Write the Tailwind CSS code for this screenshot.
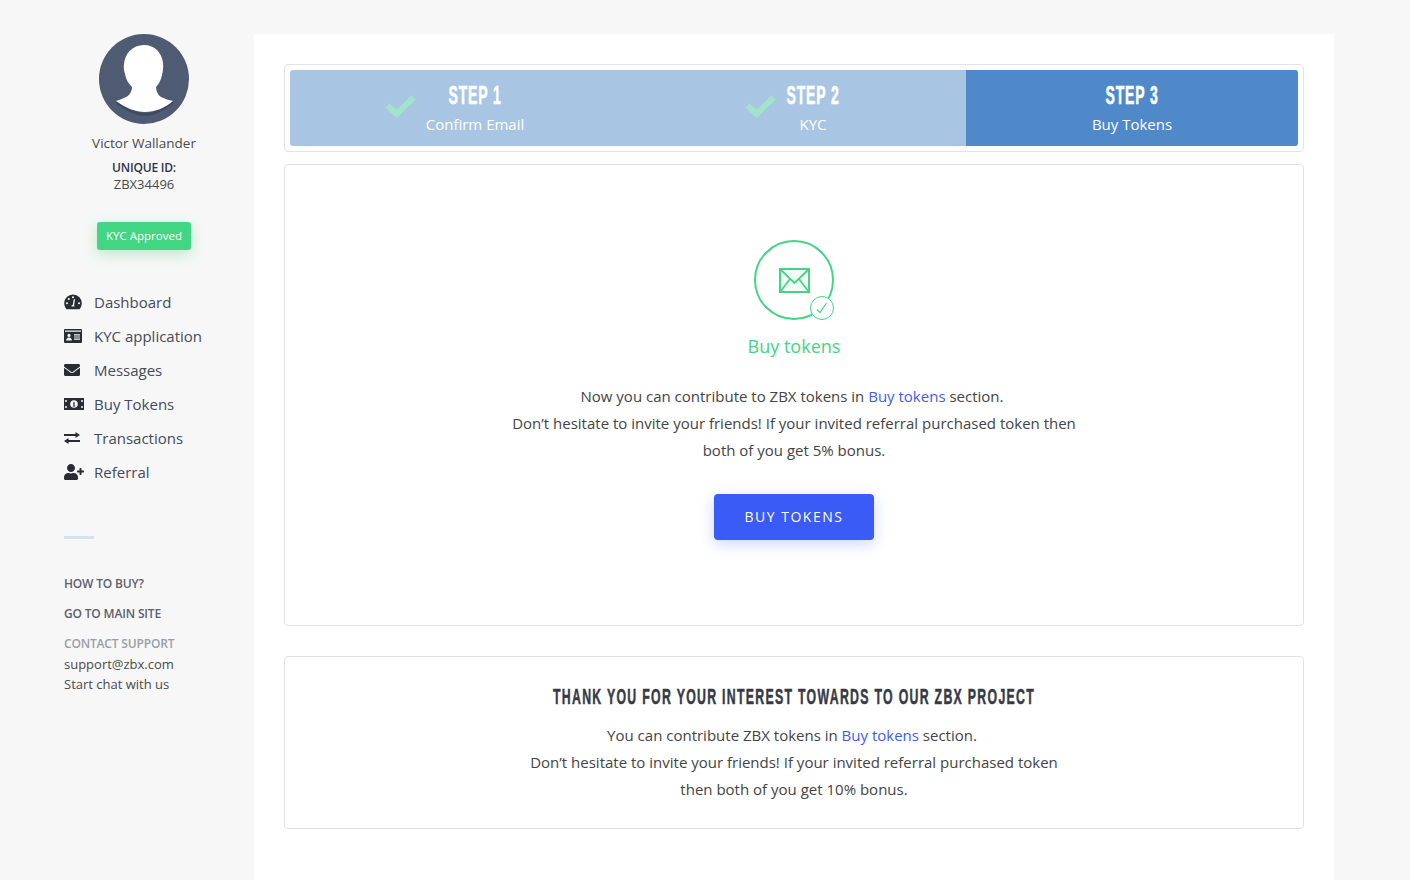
<!DOCTYPE html>
<html lang="en">
<head>
<meta charset="utf-8">
<script src="https://cdn.jsdelivr.net/npm/@tailwindcss/browser@4"></script>
<title>Buy tokens</title>
</head>
<body class="bg-[#f7f7f7] font-['Open_Sans',sans-serif] text-[#3c3c3c] h-[880px] overflow-hidden">
<div class="flex h-[880px] overflow-hidden">
  <!-- Sidebar -->
  <aside class="w-[254px] shrink-0 pt-[34px]">
    <div class="w-[288px]">
      <div class="flex flex-col items-center">
        <svg class="w-[90px] h-[90px]" viewBox="0 0 90 90">
          <circle cx="45" cy="45" r="45" fill="#4f5b72"/>
          <path d="M17 67 C27 72 36 79 46 79 C56 79 66 73 74 67 L74 70 C64 76 56 82 46 82 C36 82 27 76 17 70Z" fill="#3f4a5e"/>
          <path d="M45 11 C33 11 26 20 25 30 C24.500 33 25 37 26 40 C27 46 30 50 33 53 C33 58 30 62 26 63.500 C23 65 20 66 17 67 C27 74 36 78 46 78 C56 78 66 74 74 67 C70 66 66 65 62 63 C59 61 57 57 57 53 C60 50 62 46 63 41 C64 37 64.500 33 64 29 C63 19 56 11 45 11Z" fill="#fff"/>
        </svg>
      </div>
    </div>
    <div class="w-[288px]">
      <p class="text-center text-[13.500px] leading-[19px] mt-[10px] text-[#4a4a4a]">Victor Wallander</p>
      <p class="text-center text-[12px] leading-[16px] mt-[7px] font-semibold tracking-[-0.2px] text-[#2f3542]">UNIQUE ID:</p>
      <p class="text-center text-[13px] leading-[17px] text-[#4a4a4a]">ZBX34496</p>
      <div class="flex justify-center mt-[29px]">
        <span class="w-[94px] h-[28px] flex items-center justify-center rounded-[3px] bg-[#42d584] text-white text-[11.500px] font-medium shadow-[0_4px_14px_rgba(66,213,132,0.35)]">KYC Approved</span>
      </div>
    </div>
    <nav class="ml-[64px] mt-[35px] flex flex-col text-[15px] text-[#454b57]">
      <a class="flex items-center h-[34px]"><span class="w-[30px] shrink-0">
        <svg class="w-[18px] h-[16px]" viewBox="0 0 18 16"><path fill="#2b2b33" fill-rule="evenodd" d="M9 0.500a8.800 8.800 0 0 0-8.800 8.800c0 2.100.8 4.100 2.100 5.700.2.200.5.300.8.300h11.800c.3 0 .6-.1.800-.3 1.300-1.600 2.100-3.600 2.100-5.700A8.800 8.800 0 0 0 9 0.500ZM9 2.200a1 1 0 1 1 0 2.100 1 1 0 0 1 0-2.100ZM3 10.300a1 1 0 1 1 0-2.100 1 1 0 0 1 0 2.100ZM4.800 6a1 1 0 1 1 0-2.100A1 1 0 0 1 4.800 6ZM15 10.300a1 1 0 1 1 0-2.100 1 1 0 0 1 0 2.100ZM10.600 12.400H7.400c.1-.9.700-1.600 1.400-1.700l.9-5.200c.1-.4.400-.6.800-.5.300.1.500.4.500.7l-.9 5.200c.3.300.5.900.5 1.500Z"/></svg>
      </span>Dashboard</a>
      <a class="flex items-center h-[34px]"><span class="w-[30px] shrink-0">
        <svg class="w-[18px] h-[14px] block" viewBox="0 0 18 14"><path fill="#2b2b33" fill-rule="evenodd" d="M1 0h16a1 1 0 0 1 1 1v12a1 1 0 0 1-1 1H1a1 1 0 0 1-1-1V1a1 1 0 0 1 1-1ZM1 2.800h16V1.600H1ZM5 4.800a1.600 1.600 0 1 0 0 3.200 1.600 1.600 0 0 0 0-3.200ZM2.200 11.400h5.600c0-1.700-1.100-2.800-2.800-2.800s-2.800 1.100-2.800 2.800ZM10 5.200v1.200h6V5.200ZM10 7.400v1.200h6V7.400ZM10 9.600v1.200h6V9.600Z"/></svg>
      </span>KYC application</a>
      <a class="flex items-center h-[34px]"><span class="w-[30px] shrink-0">
        <svg class="w-[16px] h-[16px] block" viewBox="0 0 512 512"><path fill="#2b2b33" d="M502.300 190.800c3.900-3.100 9.700-.2 9.700 4.700V400c0 26.500-21.500 48-48 48H48c-26.500 0-48-21.500-48-48V195.600c0-5 5.700-7.800 9.700-4.700 22.400 17.400 52.100 39.500 154.100 113.600 21.100 15.400 56.700 47.800 92.200 47.600 35.700.3 72-32.800 92.300-47.600 102-74.100 131.600-96.300 154-113.700zM256 320c23.200.4 56.600-29.200 73.400-41.400 132.700-96.300 142.800-104.700 173.400-128.700 5.800-4.500 9.200-11.500 9.200-18.900v-19c0-26.500-21.500-48-48-48H48C21.500 64 0 85.500 0 112v19c0 7.400 3.400 14.300 9.200 18.900 30.600 23.900 40.700 32.400 173.400 128.700 16.800 12.200 50.200 41.800 73.400 41.400z"/></svg>
      </span>Messages</a>
      <a class="flex items-center h-[34px]"><span class="w-[30px] shrink-0">
        <svg class="w-[20px] h-[12px] block" viewBox="0 0 20 12"><path fill="#2b2b33" fill-rule="evenodd" d="M0 0h20v12H0ZM10 2.200a3.800 3.800 0 1 0 0 7.600 3.800 3.800 0 0 0 0-7.600ZM9.300 4.200h1.300v3.600h.7v.8H8.700v-.8h.7V5.300h-.6ZM2 2a1 1 0 1 0 0 2 1 1 0 0 0 0-2ZM18 2a1 1 0 1 0 0 2 1 1 0 0 0 0-2ZM2 8a1 1 0 1 0 0 2 1 1 0 0 0 0-2ZM18 8a1 1 0 1 0 0 2 1 1 0 0 0 0-2Z"/></svg>
      </span>Buy Tokens</a>
      <a class="flex items-center h-[34px]"><span class="w-[30px] shrink-0">
        <svg class="w-[16px] h-[14px] block" viewBox="0 0 16 14"><path fill="#2b2b33" d="M11.500 1 16 4l-4.500 3V5H0V3h11.500ZM4.500 7v2H16v2H4.500v2L0 10Z"/></svg>
      </span>Transactions</a>
      <a class="flex items-center h-[34px]"><span class="w-[30px] shrink-0">
        <svg class="w-[20px] h-[16px] block" viewBox="0 0 640 512"><path fill="#2b2b33" d="M624 208h-64v-64c0-8.800-7.200-16-16-16h-32c-8.800 0-16 7.200-16 16v64h-64c-8.800 0-16 7.200-16 16v32c0 8.800 7.200 16 16 16h64v64c0 8.800 7.200 16 16 16h32c8.800 0 16-7.200 16-16v-64h64c8.800 0 16-7.200 16-16v-32c0-8.800-7.200-16-16-16zm-400 48c70.700 0 128-57.300 128-128S294.700 0 224 0 96 57.300 96 128s57.300 128 128 128zm89.600 32h-16.700c-22.200 10.200-46.900 16-72.900 16s-50.600-5.800-72.900-16h-16.700C60.200 288 0 348.200 0 422.400V464c0 26.500 21.500 48 48 48h352c26.500 0 48-21.500 48-48v-41.600c0-74.200-60.200-134.400-134.400-134.400z"/></svg>
      </span>Referral</a>
    </nav>
    <div class="ml-[64px] mt-[47px] w-[30px] h-[3px] bg-[#d3e2f5]"></div>
    <div class="ml-[64px] mt-[36px] text-[12px] leading-[18px] font-semibold tracking-[-0.17px]">
      <p class="text-[#5b616e]">HOW TO BUY?</p>
      <p class="text-[#5b616e] mt-[12px]">GO TO MAIN SITE</p>
      <p class="text-[#9a9ea6] mt-[12px]">CONTACT SUPPORT</p>
    </div>
    <div class="ml-[64px] mt-[1px] text-[13px] leading-[20px] text-[#4a4a4a]">
      <p>support@zbx.com</p>
      <p>Start chat with us</p>
    </div>
  </aside>

  <!-- Main -->
  <main class="w-[1080px] shrink-0 bg-white mt-[34px] px-[30px] pt-[30px] h-[900px]">
    <!-- Steps -->
    <div class="border border-[#e3e3e3] rounded-[4px] p-[5px] h-[88px]">
      <div class="flex h-[76px] rounded-[3px] overflow-hidden text-white text-center">
        <div class="relative w-[370px] bg-[#a8c5e3]">
          <svg class="absolute left-[95px] top-[25px] w-[31px] h-[23px]" viewBox="0 0 31 23"><path d="M2.500 10.500 11.500 19 28.500 2.500" fill="none" stroke="#a3e2cb" stroke-width="6"/></svg>
          <p class="font-['Liberation_Sans',sans-serif] font-bold text-[25px] leading-[30px] mt-[10px] tracking-[1.500px] scale-x-[0.56] [-webkit-text-stroke:0.6px_white]">STEP 1</p>
          <p class="text-[15px] leading-[20px] mt-[4px]">Confirm Email</p>
        </div>
        <div class="relative w-[306px] bg-[#a8c5e3]">
          <svg class="absolute left-[85px] top-[25px] w-[31px] h-[23px]" viewBox="0 0 31 23"><path d="M2.500 10.500 11.500 19 28.500 2.500" fill="none" stroke="#a3e2cb" stroke-width="6"/></svg>
          <p class="font-['Liberation_Sans',sans-serif] font-bold text-[25px] leading-[30px] mt-[10px] tracking-[1.500px] scale-x-[0.56] [-webkit-text-stroke:0.6px_white]">STEP 2</p>
          <p class="text-[15px] leading-[20px] mt-[4px]">KYC</p>
        </div>
        <div class="w-[332px] bg-[#4f89c9]">
          <p class="font-['Liberation_Sans',sans-serif] font-bold text-[25px] leading-[30px] mt-[10px] tracking-[1.500px] scale-x-[0.56] [-webkit-text-stroke:0.6px_white]">STEP 3</p>
          <p class="text-[15px] leading-[20px] mt-[4px]">Buy Tokens</p>
        </div>
      </div>
    </div>

    <!-- Buy card -->
    <section class="border border-[#e3e3e3] rounded-[4px] mt-[12px] h-[462px] pt-[75px] flex flex-col items-center">
      <div class="relative w-[80px] h-[80px] rounded-full border-2 border-[#42d584] flex items-center justify-center">
        <svg class="w-[31px] h-[25px]" viewBox="0 0 31 25"><rect x="1" y="1" width="29" height="23" fill="#f2fbf7" stroke="#42d584" stroke-width="2"/><path d="M1 1 15.500 15 30 1M1 24 11 11M30 24 20 11" fill="none" stroke="#42d584" stroke-width="1.800"/></svg>
        <span class="absolute left-[54px] top-[54px] w-[24px] h-[24px] rounded-full bg-white border border-[#42d584] flex items-center justify-center">
          <svg class="w-[12px] h-[12px]" viewBox="0 0 12 12"><path d="M1 7.500 4 10.500 10.500 1" fill="none" stroke="#42d584" stroke-width="1.200"/></svg>
        </span>
      </div>
      <h2 class="text-[18px] leading-[26px] mt-[13px] text-[#42d584]">Buy tokens</h2>
      <p class="text-[15px] leading-[27px] mt-[24px] w-[600px] text-center text-[#444]"><span class="pr-[4px]">Now you can contribute to ZBX tokens in <span class="text-[#3f5bf6]">Buy tokens</span> section.</span><br>Don’t hesitate to invite your friends! If your invited referral purchased token then<br>both of you get 5% bonus.</p>
      <button class="mt-[30px] w-[160px] h-[46px] pb-[2px] rounded-[4px] bg-[#3b5bf7] text-white text-[14px] tracking-[1.500px] shadow-[0_4px_14px_rgba(59,91,247,0.25)]">BUY TOKENS</button>
    </section>

    <!-- Thanks card -->
    <section class="border border-[#e3e3e3] rounded-[4px] mt-[30px] h-[173px] pt-[25px] text-center">
      <h3 class="font-['Liberation_Sans',sans-serif] font-bold text-[22px] leading-[30px] tracking-[2.300px] text-[#353a45] uppercase scale-x-[0.56] [-webkit-text-stroke:0.5px_#353a45]">Thank you for your interest towards to our ZBX project</h3>
      <p class="text-[15px] leading-[27px] mt-[10px] text-[#444]"><span class="pr-[4px]">You can contribute ZBX tokens in <span class="text-[#3f5bf6]">Buy tokens</span> section.</span><br>Don’t hesitate to invite your friends! If your invited referral purchased token<br>then both of you get 10% bonus.</p>
    </section>
  </main>
</div>
</body>
</html>
